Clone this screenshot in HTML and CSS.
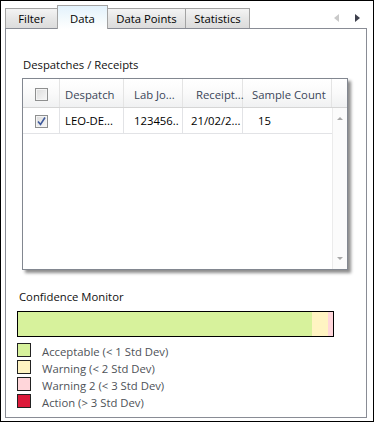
FILE: index.html
```html
<!DOCTYPE html>
<html lang="en">
<head>
    <meta charset="UTF-8">
    <title>Data</title>
    <link rel="stylesheet" href="styles.css">
</head>
<body>
    <div class="window">
        <div class="tabstrip">
            <div class="tab tab-filter">Filter</div>
            <div class="tab tab-data active">Data</div>
            <div class="tab tab-points">Data Points</div>
            <div class="tab tab-stats">Statistics</div>
            <div class="tab-scroll">
                <span class="arrow arrow-left"></span>
                <span class="arrow arrow-right"></span>
            </div>
        </div>

        <div class="panel">
            <div class="section-label">Despatches / Receipts</div>

            <div class="grid">
                <div class="grid-head">
                    <div class="cell col-check"><span class="checkbox"></span></div>
                    <div class="cell col-despatch">Despatch</div>
                    <div class="cell col-job">Lab Jo...</div>
                    <div class="cell col-receipt head-receipt">Receipt...</div>
                    <div class="cell col-count head-count">Sample Count</div>
                    <div class="cell col-filler"></div>
                </div>
                <div class="grid-body">
                    <div class="grid-rows">
                        <div class="grid-row">
                            <div class="cell col-check">
                                <span class="checkbox checked">
                                    <svg width="11" height="11" viewBox="0 0 11 11">
                                        <path d="M2 5.5 L4.5 8.5 L9 1.5" fill="none" stroke="#3f5a9c" stroke-width="1.6"/>
                                    </svg>
                                </span>
                            </div>
                            <div class="cell col-despatch">LEO-DE...</div>
                            <div class="cell col-job">123456..</div>
                            <div class="cell col-receipt">21/02/2...</div>
                            <div class="cell col-count">15</div>
                        </div>
                    </div>
                    <div class="scrollbar">
                        <span class="scroll-arrow up"></span>
                        <span class="scroll-arrow down"></span>
                    </div>
                </div>
            </div>

            <div class="section-label monitor-label">Confidence Monitor</div>
            <div class="monitor-bar">
                <div class="seg acceptable" style="width: 294px"></div>
                <div class="seg warning" style="width: 16px"></div>
                <div class="seg warning2" style="width: 5px"></div>
            </div>

            <ul class="legend">
                <li><span class="swatch acceptable"></span>Acceptable (&lt; 1 Std Dev)</li>
                <li><span class="swatch warning"></span>Warning (&lt; 2 Std Dev)</li>
                <li><span class="swatch warning2"></span>Warning 2 (&lt; 3 Std Dev)</li>
                <li><span class="swatch action"></span>Action (&gt; 3 Std Dev)</li>
            </ul>
        </div>
    </div>
</body>
</html>
```

FILE: styles.css
```css
:root {
    --border: #898c95;
    --tab-border: #a3a3a3;
    --grid-border: #828790;
    --line: #e2e3e6;
    --acceptable: #d7f29c;
    --warning: #fff4c2;
    --warning2: #ffd6da;
    --action: #dc1a3a;
}

* {
    margin: 0;
    padding: 0;
    box-sizing: border-box;
}

body {
    font-family: 'Open Sans', 'Noto Sans', sans-serif;
    font-size: 11.3px;
    color: #000;
    background: #fff;
}

.window {
    width: 374px;
    height: 422px;
    border: 1px solid #000;
    background: #fff;
}

/* tabs */

.tabstrip {
    height: 27px;
    display: flex;
    align-items: flex-end;
    padding-left: 4px;
}

.tab {
    height: 20px;
    border: 1px solid var(--tab-border);
    border-bottom: none;
    margin-left: -1px;
    background: linear-gradient(#f4f4f4, #e6e6e6 50%, #dcdcdc);
    line-height: 19px;
    text-align: center;
}

.tab-filter { width: 53px; margin-left: 0; }
.tab-data { width: 51px; }
.tab-points { width: 79px; }
.tab-stats { width: 65px; }

.tab.active {
    height: 24px;
    margin-bottom: -1px;
    padding-top: 3px;
    position: relative;
    z-index: 1;
    background: linear-gradient(#e3f2fc, #f4fafd 60%, #fff);
}

.tab-scroll {
    margin-left: auto;
    height: 20px;
    display: flex;
    align-items: center;
    gap: 16px;
    padding-right: 13px;
}

.arrow {
    width: 0;
    height: 0;
    border-top: 4px solid transparent;
    border-bottom: 4px solid transparent;
}

.arrow-left { border-right: 5px solid #c9c9c9; }
.arrow-right { border-left: 5px solid #3d3f4c; }

/* panel */

.panel {
    height: 390px;
    margin: 0 6px 0 4px;
    border: 1px solid var(--border);
    padding-top: 28px;
}

.section-label {
    line-height: 16px;
    margin-left: 17px;
    color: #111;
}

/* grid */

.grid {
    width: 326px;
    height: 192px;
    margin: 5px 0 0 16px;
    border: 1px solid var(--grid-border);
    box-shadow: 3px 3px 3px rgba(0, 0, 0, 0.45);
    display: flex;
    flex-direction: column;
}

.grid-head {
    height: 29px;
    display: flex;
    border-bottom: 1px solid #d5d5d5;
    background: linear-gradient(#fff, #fafafa 50%, #f0f1f2);
    color: #3a4658;
}

.grid-head .cell {
    padding-top: 3px;
    border-right-color: #e4e4e4;
}

.cell {
    display: flex;
    align-items: center;
    border-right: 1px solid var(--line);
    white-space: nowrap;
    flex-shrink: 0;
}

.col-check { width: 37px; justify-content: center; }
.col-despatch { width: 64px; padding-left: 5px; }
.col-job { width: 59px; padding-left: 10px; }
.col-receipt { width: 60px; padding-left: 8px; }
.col-count { width: 89px; padding-left: 15px; }
.col-filler { width: 15px; border-right: none; }

.head-receipt { padding-left: 13px; }
.head-count { padding-left: 9px; }

.grid-body {
    flex: 1;
    display: flex;
}

.grid-rows {
    width: 309px;
}

.grid-row {
    height: 26px;
    display: flex;
    border-bottom: 1px solid var(--line);
}

.grid-row .col-count {
    border-right: none;
}

.scrollbar {
    width: 15px;
    border-left: 1px solid #ebebeb;
    background: #fbfbfb;
    display: flex;
    flex-direction: column;
    justify-content: space-between;
    align-items: center;
    padding: 9px 0 9px;
}

.scroll-arrow {
    width: 0;
    height: 0;
    border-left: 3px solid transparent;
    border-right: 3px solid transparent;
}

.scroll-arrow.up { border-bottom: 3px solid #a8a8a8; }
.scroll-arrow.down { border-top: 3px solid #a8a8a8; }

.checkbox {
    width: 13px;
    height: 13px;
    border: 1px solid #8e8f8f;
    background: linear-gradient(135deg, #dcdcdc, #f7f7f7);
    box-shadow: inset 0 0 0 1px #f4f4f4;
    display: flex;
    align-items: center;
    justify-content: center;
}

.checkbox.checked {
    margin-top: 1px;
}

/* confidence monitor */

.monitor-label {
    margin: 19px 0 0 13px;
}

.monitor-bar {
    width: 317px;
    height: 26px;
    margin: 6px 0 0 11px;
    border: 1px solid #000;
    display: flex;
}

.seg {
    height: 100%;
    flex-shrink: 0;
}

.acceptable { background: var(--acceptable); }
.warning { background: var(--warning); }
.warning2 { background: var(--warning2); }
.action { background: var(--action); }

.legend {
    list-style: none;
    margin: 6px 0 0 11px;
}

.legend li {
    height: 17px;
    display: flex;
    align-items: center;
    gap: 11px;
    color: #4e5258;
    line-height: 17px;
}

.swatch {
    width: 14px;
    height: 14px;
    border: 1px solid #222;
    margin-bottom: 3px;
}
```
